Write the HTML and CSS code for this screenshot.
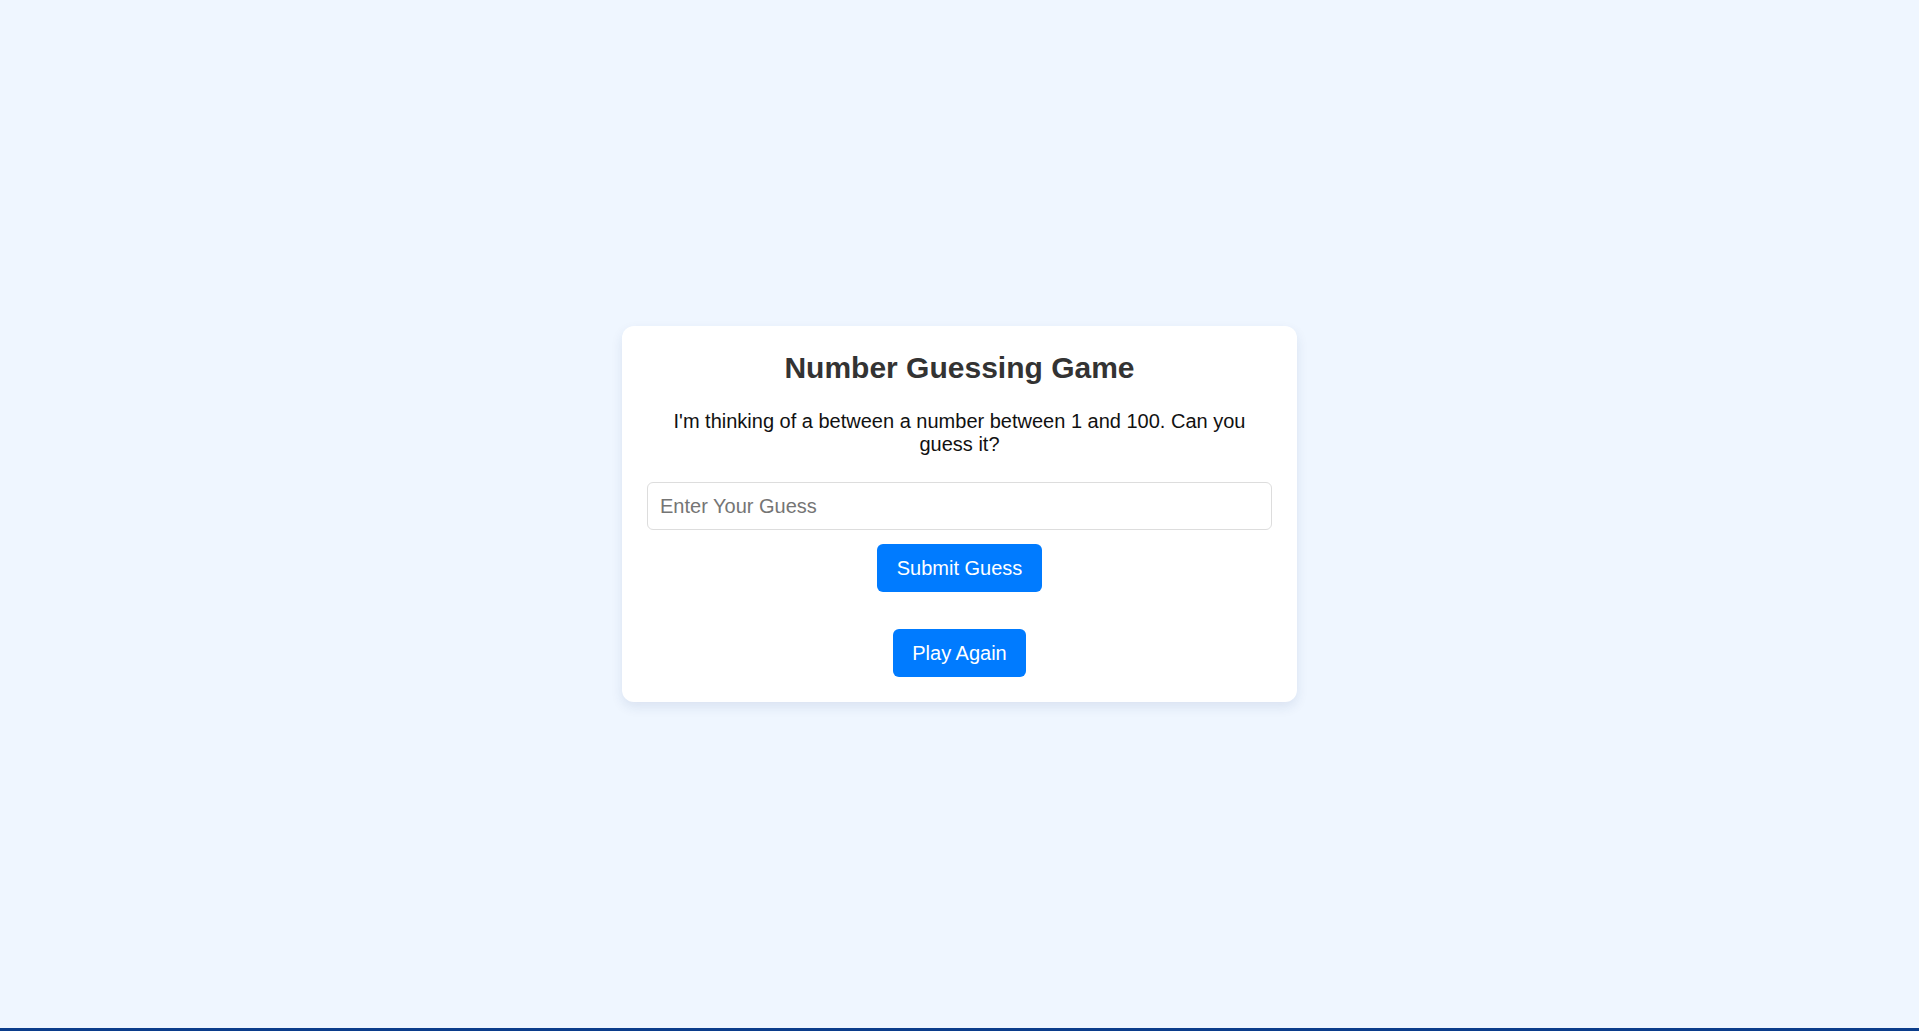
FILE: index.html
```html
<!DOCTYPE html>
<html lang="en">
<head>
    <meta charset="UTF-8">
    <title>Number Guessing Game</title>
    <link rel="stylesheet" href="styles.css">
</head>
<body>
<div id="page">
    <div class="game-card">
        <h1 class="game-title">Number Guessing Game</h1>
        <p class="game-intro">I'm thinking of a between a number between 1 and 100. Can you guess it?</p>
        <input class="guess-input" type="number" placeholder="Enter Your Guess">
        <button class="btn">Submit Guess</button>
        <div class="message"></div>
        <button class="btn">Play Again</button>
    </div>
</div>
</body>
</html>
```

FILE: styles.css
```css
* {
    padding: 0;
    margin: 0;
    box-sizing: border-box;
}

html,
body {
    width: 100%;
    height: 100%;
}

body {
    background: #eff6ff;
    font-family: "Liberation Sans", Arial, sans-serif;
    border-bottom: 3px solid #0b3d8b;
}

#page {
    height: 100%;
    display: flex;
    align-items: center;
    justify-content: center;
}

.game-card {
    width: 675px;
    padding: 25px;
    background: #ffffff;
    border-radius: 12px;
    box-shadow: 0 5px 12px rgba(30, 60, 120, 0.1);
    display: flex;
    flex-direction: column;
    align-items: center;
    text-align: center;
}

.game-title {
    font-size: 30px;
    line-height: 34px;
    color: #333333;
    margin-bottom: 25px;
}

.game-intro {
    font-size: 20px;
    line-height: 23px;
    color: #111111;
    margin-bottom: 26px;
}

.guess-input {
    width: 100%;
    height: 48px;
    padding: 0 12px;
    border: 1px solid #dddddd;
    border-radius: 6px;
    font-family: inherit;
    font-size: 20px;
    color: #333333;
    outline: none;
}

.guess-input::placeholder {
    color: #757575;
}

.btn {
    margin-top: 14px;
    padding: 12.5px 19.5px;
    line-height: 23px;
    border: none;
    border-radius: 6px;
    background: #007bff;
    color: #ffffff;
    font-family: inherit;
    font-size: 20px;
    cursor: pointer;
}

.message {
    height: 23px;
}
```
